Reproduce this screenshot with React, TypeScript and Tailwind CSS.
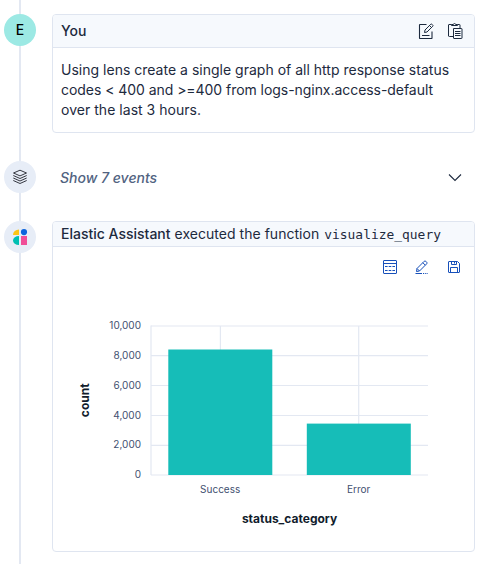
import type { ReactNode } from 'react';

function Avatar({ className, children }: { className: string; children: ReactNode }) {
  return (
    <div className={`flex size-8 shrink-0 items-center justify-center rounded-full ${className}`}>{children}</div>
  );
}

function EditIcon() {
  return (
    <svg width="16" height="16" viewBox="0 0 16 16" fill="none" stroke="#1d2a3e" strokeLinejoin="round">
      <path d="M8.500 1.500H2Q1.500 1.500 1.500 2V15Q1.500 15.500 2 15.500H13.500Q14 15.500 14 15V8.500" strokeWidth="1.100" />
      <path d="M4 12.500H11.500" />
      <path d="M6.500 9.500 7 7 12.800 1.200Q13.300.700 13.800 1.200L14.800 2.200Q15.200 2.700 14.800 3.200L9 9Z" />
      <path d="M11.500 2.500 13.500 4.500" />
    </svg>
  );
}

function PasteIcon() {
  return (
    <svg width="16" height="16" viewBox="0 0 16 16" fill="none" stroke="#1d2a3e" strokeLinejoin="round">
      <path d="M5.500 13.500H1.500Q.500 13.500.500 13V2Q.500 1.500 1 1.500H3.500M9.500 1.500H11.500Q12 1.500 12 2V5" />
      <path d="M3.500 2.500V1.500H5Q6.500-.500 8 1.500H9.500V2.500Z" />
      <path d="M5.500 5.500H13.500Q14 5.500 14 6V15Q14 15.500 13.500 15.500H6Q5.500 15.500 5.500 15ZM7 8.500H12.500M7 10.500H12.500M7 12.500H12.500" />
    </svg>
  );
}

function LayersIcon() {
  return (
    <svg width="16" height="16" viewBox="0 0 16 16" fill="none" stroke="#343741" strokeLinejoin="round">
      <path d="M8 1.200 14.500 4 8 6.900 1.500 4Z" />
      <path d="M1.300 6.500 8 9.500 14.700 6.500M1.300 9 8 12 14.700 9M1.300 11.500 8 14.500 14.700 11.500" />
    </svg>
  );
}

function AssistantLogo() {
  return (
    <svg width="16" height="16" viewBox="0 0 16 16">
      <path d="M1 6A6 5.500 0 0 1 7 .500V6Z" fill="#fec514" />
      <circle cx="12" cy="3.100" r="3.100" fill="#0b64dd" />
      <path d="M7 7V16A6 4.500 0 0 1 7 7Z" fill="#00bfb3" />
      <path d="M9 7H15V16H9Z" fill="#f04e98" />
    </svg>
  );
}

function TableIcon() {
  return (
    <svg width="16" height="16" viewBox="0 0 16 16" fill="none" stroke="#1750ba">
      <rect x="1.500" y="1.500" width="13" height="13" rx=".5" />
      <path d="M1.500 4.500H14.500" />
      <path d="M3 7.500H13M3 11.500H13" strokeDasharray="2.600 1.100" />
    </svg>
  );
}

function PencilIcon() {
  return (
    <svg width="16" height="16" viewBox="0 0 16 16" fill="none" stroke="#1750ba" strokeLinejoin="round">
      <path d="M2.500 12.500 3 9.500 10.200 2.300Q11 1.500 11.800 2.300L12.700 3.200Q13.500 4 12.700 4.800L5.500 12ZM8.800 3.700 11.300 6.200M3 9.500 5.500 12" />
      <path d="M1.500 14.500H8" />
      <path d="M9 14.500H14" strokeDasharray="1.200 1" />
    </svg>
  );
}

function SaveIcon() {
  return (
    <svg width="16" height="16" viewBox="0 0 16 16" fill="none" stroke="#1750ba" strokeLinejoin="round">
      <path d="M3 2.500H11.500L13.500 4.500V13Q13.500 13.500 13 13.500H3Q2.500 13.500 2.500 13V3Q2.500 2.500 3 2.500Z" />
      <path d="M5.500 2.500V5.500H10.500V2.500M8.500 3V4.500M4.500 13.500V8.500H11.500V13.500" />
    </svg>
  );
}

const yTicks = [
  { label: '10,000', y: 326 },
  { label: '8,000', y: 355.7 },
  { label: '6,000', y: 385.5 },
  { label: '4,000', y: 415.5 },
  { label: '2,000', y: 445.3 },
  { label: '0', y: 475 },
];

function StatusChart() {
  return (
    <svg width="421" height="264" viewBox="53 287 421 264" className="block font-['Inter',sans-serif]">
      <g stroke="#e3e8f2" strokeWidth="1.200">
        {yTicks.map((t) => (
          <path key={t.label} d={`M151 ${t.y}H428`} />
        ))}
        <path d="M151 325.500V475M220.400 326V475M358.700 326V475" />
      </g>
      <rect x="168.300" y="349.500" width="104" height="125.500" fill="#16bdb8" />
      <rect x="306.800" y="423.600" width="104" height="51.400" fill="#16bdb8" />
      <g fontSize="10" fill="#3f5070">
        {yTicks.map((t) => (
          <text key={t.label} x="141" y={t.y + 3.1} textAnchor="end">{t.label}</text>
        ))}
        <text x="220.200" y="493" textAnchor="middle">Success</text>
        <text x="358.700" y="493" textAnchor="middle">Error</text>
      </g>
      <g fontSize="12" fontWeight="700" fill="#111c2c">
        <text x="289.500" y="523" textAnchor="middle">status_category</text>
        <text transform="translate(89.300 400.300) rotate(-90)" textAnchor="middle">count</text>
      </g>
    </svg>
  );
}

export default function App() {
  return (
    <div className="h-[564px] w-[485px] overflow-hidden bg-[linear-gradient(#e3e8f2,#e3e8f2)] bg-[length:2px_100%] bg-[position:19px_0] bg-no-repeat pt-3.5 pr-2.5 pl-1 font-['Inter',sans-serif] text-sm leading-5 text-[#1d2a3e]">
      <div className="flex gap-4">
        <Avatar className="bg-[#9ce9e4] font-medium text-black">E</Avatar>
        <section className="h-[119px] w-[423px] overflow-hidden rounded border border-[#dfe5f0]">
          <header className="flex h-[33px] items-center justify-between border-b border-[#dfe5f0] bg-[#f6f9fd] px-2">
            <span className="font-[550]">You</span>
            <span className="flex gap-3.5 pr-0.5"><EditIcon /><PasteIcon /></span>
          </header>
          <p className="px-2 pt-3">
            <span className="block whitespace-nowrap tracking-[0.01px]">Using lens create a single graph of all http response status</span>
            <span className="block whitespace-nowrap tracking-[-0.05px]">codes &lt; 400 and &gt;=400 from logs-nginx.access-default</span>
            <span className="block tracking-[0.03px]">over the last 3 hours.</span>
          </p>
        </section>
      </div>

      <div className="mt-7 flex items-center gap-4">
        <Avatar className="bg-[#e7edf7]"><LayersIcon /></Avatar>
        <div className="flex flex-1 items-center justify-between pt-0.5 pr-3 pl-2">
          <span className="font-medium text-[#516381] italic">Show 7 events</span>
          <svg width="16" height="16" viewBox="0 0 16 16" fill="none" stroke="#1d2a3e" strokeWidth="1.100"><path d="M2 4.500 8 10.500 14 4.500" /></svg>
        </div>
      </div>

      <div className="mt-7 flex gap-4">
        <Avatar className="bg-[#e7edf7]"><AssistantLogo /></Avatar>
        <section className="h-[331px] w-[423px] overflow-hidden rounded border border-[#dfe5f0] bg-white">
          <header className="flex h-[25px] items-center gap-1 border-b border-[#dfe5f0] bg-[#f6f9fd] px-2 whitespace-nowrap">
            <span className="font-[550]">Elastic Assistant</span>
            <span className="tracking-[0.03px]">executed the function</span>
            <code className="pt-px pl-px font-['DejaVu_Sans_Mono',monospace] text-[12.900px] tracking-[0.02px]">visualize_query</code>
          </header>
          <div className="flex h-10 items-center justify-end gap-4 pr-3">
            <TableIcon /><PencilIcon /><SaveIcon />
          </div>
          <StatusChart />
        </section>
      </div>
    </div>
  );
}
